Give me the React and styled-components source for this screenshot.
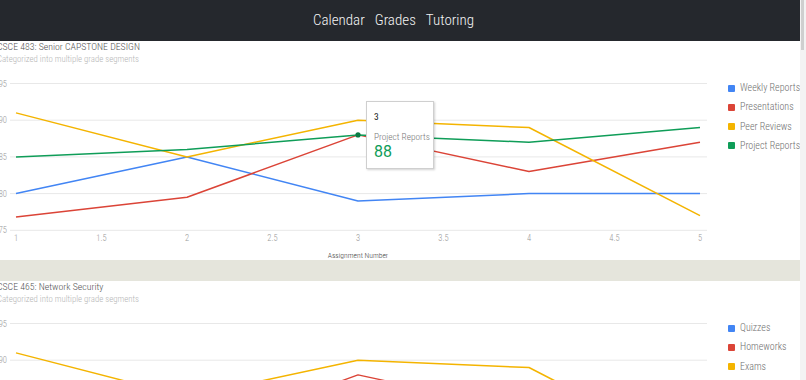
import React from 'react';
import styled, { createGlobalStyle } from 'styled-components';

const FONT = '"Roboto Condensed", Roboto, "Liberation Sans", sans-serif';

const GlobalStyle = createGlobalStyle`
  html, body {
    margin: 0;
    padding: 0;
    overflow: hidden;
    background: #fff;
    font-family: ${FONT};
  }
`;

const COLORS = {
  blue: '#4285f4',
  red: '#db4437',
  yellow: '#f4b400',
  green: '#0f9d58',
};

const Page = styled.div`
  width: 803px;
  margin-left: -3px;
`;

const Header = styled.header`
  height: 41px;
  background-color: #25282d;
  display: flex;
  align-items: center;
  justify-content: center;
  gap: 10px;
  padding-right: 10px;
`;

const NavLink = styled.a`
  color: #f4f4f4;
  font: 300 15px/1 ${FONT};
  text-decoration: none;
`;

const Section = styled.section`
  height: 219px;
  overflow: hidden;
`;

const Title = styled.div`
  color: #555;
  font: 300 9.8px/12px ${FONT};
`;

const SubTitle = styled.div`
  color: #b5b5b5;
  font: 300 8.8px/12px ${FONT};
`;

const ChartRow = styled.div`
  position: relative;
  display: flex;
  align-items: flex-start;
`;

const Legend = styled.ul`
  list-style: none;
  margin: 0;
  padding: 17px 0 0 16px;
  display: flex;
  flex-direction: column;
  gap: 7.3px;
`;

const LegendItem = styled.li`
  display: flex;
  align-items: center;
  gap: 5px;
  height: 12px;
  color: #707070;
  font: 300 10px/12px ${FONT};
  white-space: nowrap;
`;

const Swatch = styled.span`
  width: 7px;
  height: 7px;
  border-radius: 1px;
  background-color: ${(p) => p.$color};
`;

const Divider = styled.div`
  height: 21px;
  background-color: #e5e5dc;
`;

const Tooltip = styled.div`
  position: absolute;
  left: 369px;
  top: 36px;
  width: 68px;
  height: 68px;
  box-sizing: border-box;
  padding: 9px 7px;
  background: #fff;
  border: 1px solid #cfcfcf;
  box-shadow: 1px 1px 2px rgba(0, 0, 0, 0.18);
  white-space: nowrap;
`;

const TipTitle = styled.div`
  color: #222;
  font: 400 9.5px/12px ${FONT};
`;

const TipLabel = styled.div`
  margin-top: 8px;
  color: #777;
  font: 300 9.3px/12px ${FONT};
`;

const TipValue = styled.div`
  color: ${COLORS.green};
  font: 400 16px/18px Roboto, sans-serif;
`;

const Scrollbar = styled.div`
  position: fixed;
  top: 0;
  right: 0;
  width: 6px;
  height: 100%;
  background: #f3f3f3;
  &::before {
    content: '';
    position: absolute;
    left: 1px;
    top: 0;
    width: 3px;
    height: 50px;
    background: #cfcfcf;
  }
`;

const W = 715;
const H = 195;
const xs = (v) => 19 + (v - 1) * 171;
const ys = (v) => 18.5 + (95 - v) * 7.34;

const capstone = [
  { name: 'Weekly Reports', color: COLORS.blue, data: [80, 85, 79, 80, 80] },
  { name: 'Presentations', color: COLORS.red, data: [76.8, 79.5, 88, 83, 87] },
  { name: 'Peer Reviews', color: COLORS.yellow, data: [91, 85, 90, 89, 77] },
  { name: 'Project Reports', color: COLORS.green, data: [85, 86, 88, 87, 89] },
];

const security = [
  { name: 'Quizzes', color: COLORS.blue, data: [80, 85, 79, 80, 80] },
  { name: 'Homeworks', color: COLORS.red, data: [76.8, 79.5, 88, 83, 87] },
  { name: 'Exams', color: COLORS.yellow, data: [91, 85, 90, 89, 77] },
];

const LineChart = ({ series, highlight }) => (
  <svg width={W} height={H} style={{ display: 'block', flex: 'none' }} fontFamily={FONT} fontWeight="300">
    {[95, 90, 85, 80, 75].map((v) => (
      <g key={v}>
        <line x1={13} x2={710} y1={ys(v)} y2={ys(v)} stroke="#e8e8e8" strokeWidth="1" />
        <text x={10} y={ys(v) + 3} textAnchor="end" fontSize="8.5" fill="#999">
          {v}
        </text>
      </g>
    ))}
    {[1, 1.5, 2, 2.5, 3, 3.5, 4, 4.5, 5].map((v) => (
      <text key={v} x={xs(v)} y={176} textAnchor="middle" fontSize="8.5" fill="#999">
        {v}
      </text>
    ))}
    <text x={361} y={193} textAnchor="middle" fontSize="7.6" fill="#444">
      Assignment Number
    </text>
    {series.map((s) => (
      <polyline
        key={s.name}
        fill="none"
        stroke={s.color}
        strokeWidth="1.5"
        strokeLinejoin="round"
        points={s.data.map((d, i) => `${xs(i + 1)},${ys(d)}`).join(' ')}
      />
    ))}
    {highlight && (
      <circle cx={xs(highlight.x)} cy={ys(highlight.y)} r="2.6" fill="#0b7a43" />
    )}
  </svg>
);

const CourseChart = ({ title, series, tooltip }) => (
  <Section>
    <Title>{title}</Title>
    <SubTitle>Categorized into multiple grade segments</SubTitle>
    <ChartRow>
      <LineChart series={series} highlight={tooltip} />
      <Legend>
        {series.map((s) => (
          <LegendItem key={s.name}>
            <Swatch $color={s.color} />
            {s.name}
          </LegendItem>
        ))}
      </Legend>
      {tooltip && (
        <Tooltip>
          <TipTitle>{tooltip.x}</TipTitle>
          <TipLabel>{tooltip.label}</TipLabel>
          <TipValue>{tooltip.y}</TipValue>
        </Tooltip>
      )}
    </ChartRow>
  </Section>
);

const App = () => (
  <>
    <GlobalStyle />
    <Page>
      <Header>
        <NavLink href="#">Calendar</NavLink>
        <NavLink href="#">Grades</NavLink>
        <NavLink href="#">Tutoring</NavLink>
      </Header>
      <CourseChart
        title="CSCE 483: Senior CAPSTONE DESIGN"
        series={capstone}
        tooltip={{ x: 3, y: 88, label: 'Project Reports' }}
      />
      <Divider />
      <CourseChart title="CSCE 465: Network Security" series={security} />
    </Page>
    <Scrollbar />
  </>
);

export default App;
